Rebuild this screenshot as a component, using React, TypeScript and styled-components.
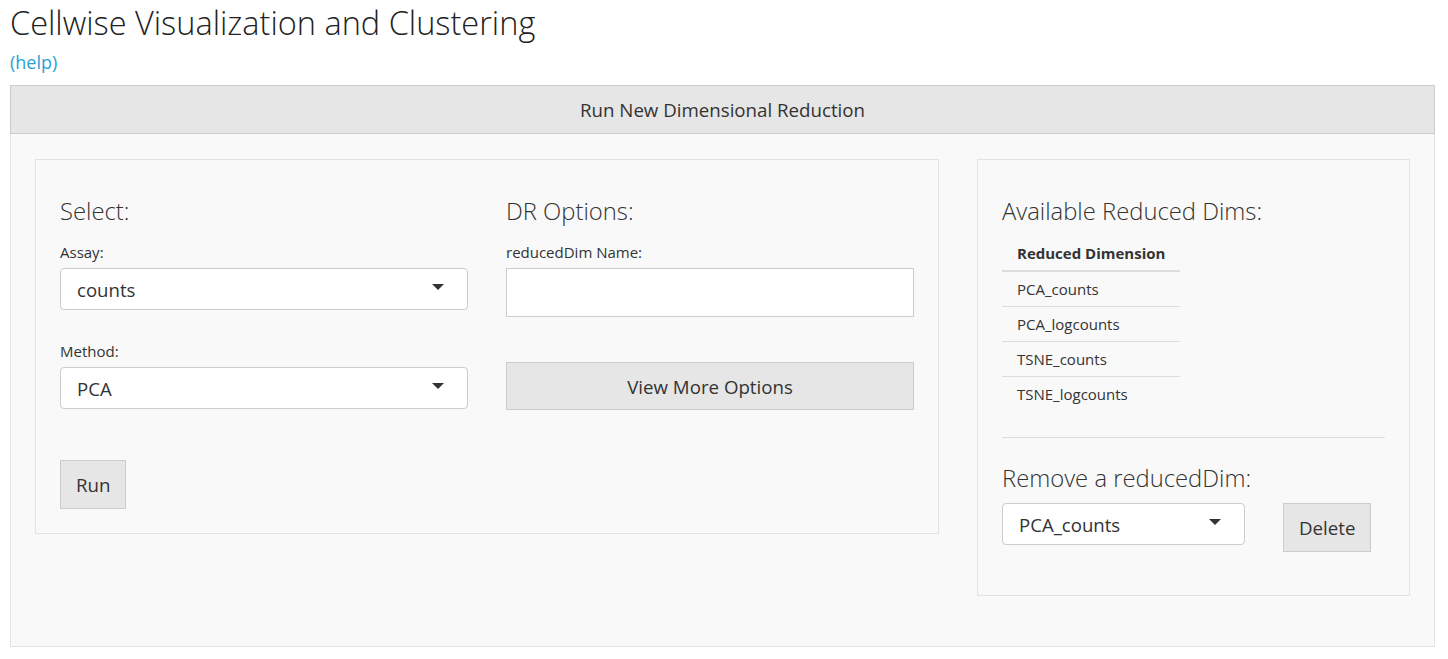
import React from "react";
import styled, { createGlobalStyle } from "styled-components";

const Global = createGlobalStyle`
  html, body { margin: 0; padding: 0; background: #ffffff; }
  body {
    font-family: "Open Sans", "Liberation Sans", sans-serif;
    color: #333333;
    font-size: 15px;
  }
  * { box-sizing: border-box; }
`;

const Page = styled.div`
  padding: 0 13px 0 10px;
`;

const Title = styled.h1`
  margin: 0;
  padding-top: 1px;
  font-size: 32.5px;
  font-weight: 300;
  line-height: 44px;
  color: #222222;
`;

const HelpLink = styled.a`
  display: block;
  margin-top: 5px;
  font-size: 18px;
  line-height: 24px;
  color: #2a9fd6;
  text-decoration: none;
`;

const Panel = styled.section`
  margin-top: 11px;
`;

const PanelHeader = styled.div`
  height: 49px;
  background: #e6e6e6;
  border: 1px solid #cccccc;
  display: flex;
  align-items: center;
  justify-content: center;
  font-size: 18.7px;
  color: #333333;
`;

const PanelBody = styled.div`
  background: #f9f9f9;
  border: 1px solid #e3e3e3;
  border-top: none;
  padding: 25px 24px 50px 24px;
  display: grid;
  grid-template-columns: 904px 433px;
  justify-content: space-between;
  align-items: start;
`;

const Well = styled.div<{ $pb?: number }>`
  background: #f9f9f9;
  border: 1px solid #e3e3e3;
  padding: 29px 24px ${(p) => p.$pb ?? 24}px 24px;
`;

const TwoCols = styled.div`
  display: grid;
  grid-template-columns: 408px 408px;
  justify-content: space-between;
`;

const Col = styled.div`
  display: flex;
  flex-direction: column;
`;

const Heading = styled.h3<{ $mt?: number }>`
  margin: ${(p) => p.$mt ?? 0}px 0 0 0;
  font-size: 23.8px;
  font-weight: 300;
  line-height: 44px;
  color: #333333;
`;

const Label = styled.label<{ $mt?: number }>`
  display: block;
  margin-top: ${(p) => p.$mt ?? 9}px;
  font-size: 15px;
  line-height: 20px;
  color: #333333;
`;

const SelectBox = styled.div<{ $mt?: number; $w?: string }>`
  margin-top: ${(p) => p.$mt ?? 6}px;
  width: ${(p) => p.$w ?? "100%"};
  height: 42px;
  background: #ffffff;
  border: 1px solid #cccccc;
  border-radius: 4px;
  display: flex;
  align-items: center;
  justify-content: space-between;
  padding: 0 23px 0 16px;
  font-size: 18.6px;
  color: #333333;
  flex-shrink: 0;
`;

const Caret = styled.span`
  width: 0;
  height: 0;
  border-left: 6px solid transparent;
  border-right: 6px solid transparent;
  border-top: 6px solid #333333;
  margin-top: -4px;
`;

const TextInput = styled.input`
  margin-top: 6px;
  width: 100%;
  height: 49px;
  background: #ffffff;
  border: 1px solid #cccccc;
  border-radius: 0;
  padding: 0 12px;
  font-family: inherit;
  font-size: 18px;
  outline: none;
`;

const Button = styled.button<{ $w?: string; $h?: number; $mt?: number }>`
  margin-top: ${(p) => p.$mt ?? 0}px;
  width: ${(p) => p.$w ?? "auto"};
  height: ${(p) => p.$h ?? 49}px;
  padding: 0 15px;
  background: #e6e6e6;
  border: 1px solid #cccccc;
  border-radius: 0;
  font-family: inherit;
  font-size: 18.7px;
  color: #333333;
  cursor: pointer;
  align-self: flex-start;
  flex-shrink: 0;
`;

const Table = styled.table`
  margin-top: 2px;
  border-collapse: collapse;
  font-size: 15px;
  width: 178px;
`;

const Th = styled.th`
  text-align: left;
  font-weight: 700;
  padding: 8px 15px 7px 15px;
  line-height: 20px;
  border-bottom: 2px solid #dddddd;
  white-space: nowrap;
`;

const Td = styled.td<{ $last?: boolean }>`
  padding: 7px 15px;
  line-height: 20px;
  border-bottom: ${(p) => (p.$last ? "none" : "1px solid #dddddd")};
  white-space: nowrap;
`;

const Rule = styled.hr`
  margin: 26px 0 0;
  border: 0;
  border-top: 1px solid #dddddd;
`;

const Row = styled.div`
  display: flex;
  align-items: flex-start;
  gap: 38px;
`;

const dims = ["PCA_counts", "PCA_logcounts", "TSNE_counts", "TSNE_logcounts"];

export default function App() {
  return (
    <>
      <Global />
      <Page>
        <Title>Cellwise Visualization and Clustering</Title>
        <HelpLink href="#">(help)</HelpLink>
        <Panel>
          <PanelHeader>Run New Dimensional Reduction</PanelHeader>
          <PanelBody>
            <Well>
              <TwoCols>
                <Col>
                  <Heading>Select:</Heading>
                  <Label>Assay:</Label>
                  <SelectBox>
                    <span>counts</span>
                    <Caret />
                  </SelectBox>
                  <Label $mt={31}>Method:</Label>
                  <SelectBox>
                    <span>PCA</span>
                    <Caret />
                  </SelectBox>
                  <Button $mt={51} $h={49}>Run</Button>
                </Col>
                <Col>
                  <Heading>DR Options:</Heading>
                  <Label>reducedDim Name:</Label>
                  <TextInput type="text" />
                  <Button $w="100%" $h={48} $mt={45}>
                    View More Options
                  </Button>
                </Col>
              </TwoCols>
            </Well>
            <Well $pb={43}>
              <Heading>Available Reduced Dims:</Heading>
              <Table>
                <thead>
                  <tr>
                    <Th>Reduced Dimension</Th>
                  </tr>
                </thead>
                <tbody>
                  {dims.map((d, i) => (
                    <tr key={d}>
                      <Td $last={i === dims.length - 1}>{d}</Td>
                    </tr>
                  ))}
                </tbody>
              </Table>
              <Rule />
              <Heading $mt={18}>Remove a reducedDim:</Heading>
              <Row>
                <SelectBox $mt={3} $w="243px">
                  <span>PCA_counts</span>
                  <Caret />
                </SelectBox>
                <Button $mt={3}>Delete</Button>
              </Row>
            </Well>
          </PanelBody>
        </Panel>
      </Page>
    </>
  );
}
